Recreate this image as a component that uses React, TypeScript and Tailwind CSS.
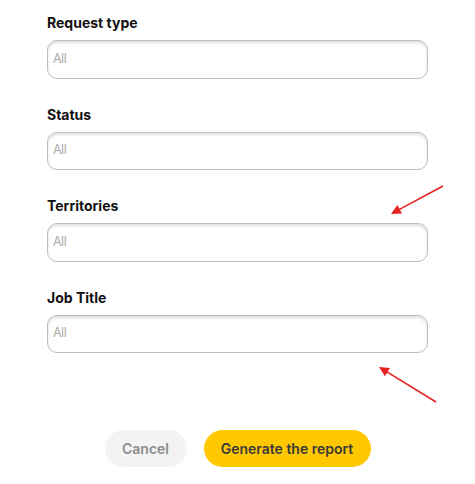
import React from "react";

const fields = ["Request type", "Status", "Territories", "Job Title"];

function Arrow({ x1, y1, x2, y2 }: { x1: number; y1: number; x2: number; y2: number }) {
  const a = Math.atan2(y2 - y1, x2 - x1);
  const L = 11;
  const w = 0.45;
  const p1 = `${x2 - L * Math.cos(a - w)},${y2 - L * Math.sin(a - w)}`;
  const p2 = `${x2 - L * Math.cos(a + w)},${y2 - L * Math.sin(a + w)}`;
  return (
    <g>
      <line x1={x1} y1={y1} x2={x2 - 6 * Math.cos(a)} y2={y2 - 6 * Math.sin(a)} stroke="#e52321" strokeWidth="1.6" />
      <polygon points={`${x2},${y2} ${p1} ${p2}`} fill="#e52321" />
    </g>
  );
}

export default function App() {
  return (
    <div className="relative h-[484px] w-[475px] bg-white font-['Inter',sans-serif]">
      <div className="ml-[47px] flex w-[381px] flex-col gap-[28px] pt-[15px]">
        {fields.map((f) => (
          <div key={f} className="flex flex-col">
            <label className="h-4 text-[14px] font-bold leading-4 text-[#111]">{f}</label>
            <div className="mt-[9px] flex h-[38.5px] items-center rounded-[10px] border border-[#bdbdbd] px-[5px] shadow-[inset_0_2px_3px_rgba(0,0,0,0.12)]">
              <span className="text-[12.5px] tracking-[-0.5px] text-[#ababab]">All</span>
            </div>
          </div>
        ))}
      </div>
      <div className="mt-[77px] flex justify-center gap-[17px]">
        <button className="h-[37px] w-[82px] rounded-full bg-[#f3f3f3] text-[14px] font-semibold text-[#8c8c8c]">
          Cancel
        </button>
        <button className="h-[37px] w-[167px] rounded-full bg-[#ffc800] text-[14px] font-semibold text-[#3a3a3a]">
          Generate the report
        </button>
      </div>
      <svg className="pointer-events-none absolute inset-0" width="475" height="484">
        <Arrow x1={443} y1={186} x2={391} y2={214} />
        <Arrow x1={436} y1={402} x2={379} y2={367} />
      </svg>
    </div>
  );
}
